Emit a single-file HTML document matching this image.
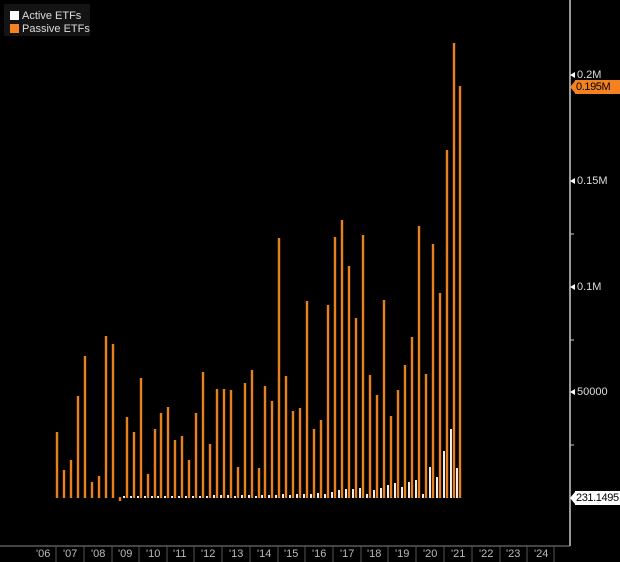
<!DOCTYPE html>
<html><head><meta charset="utf-8"><style>
html,body{margin:0;padding:0;background:#000;}
body{width:620px;height:562px;overflow:hidden;position:relative;font-family:"Liberation Sans",sans-serif;}
.legend{position:absolute;left:4px;top:4px;width:86px;height:32px;background:#141414;}
.legend div{position:absolute;left:6px;font-size:11px;color:#ddd;line-height:12px;}
.legend span{display:inline-block;width:9px;height:9px;margin-right:3px;vertical-align:-1px;}
.yl{position:absolute;left:577px;font-size:11px;color:#ddd;line-height:12px;}
.tag{position:absolute;left:575px;right:0;height:14px;line-height:14px;font-size:11px;padding-left:1px;white-space:nowrap;overflow:hidden;letter-spacing:-0.4px;}
.xl{position:absolute;top:548px;font-size:11px;color:#bbb;line-height:12px;}
</style></head><body>
<div class="legend">
<div style="top:6px"><span style="background:#fff"></span>Active ETFs</div>
<div style="top:19px"><span style="background:#f58220"></span>Passive ETFs</div>
</div>
<svg width="620" height="562" style="position:absolute;left:0;top:0">
<line x1="570" y1="0" x2="570" y2="546" stroke="#ccc" stroke-width="1.5"/>
<line x1="0" y1="546" x2="570" y2="546" stroke="#888" stroke-width="1"/>
<path d="M570 75l5 -3v6z M570 181l5 -3v6z M570 287l5 -3v6z M570 392l5 -3v6z M570 498l5 -6v12z" fill="#fff"/>
<path d="M570 87l5 -6v12z" fill="#f58220"/>
<path d="M570 234h4 M570 340h4 M570 445h4" stroke="#ccc"/>
<path stroke="#e8801e" stroke-width="2.4" d="M57 498V432M64 498V470M71 498V460M78 498V396M85 498V356M92 498V482M99 498V476M106 498V336M113 498V344M120 497V501M127 498V417M134 498V432M141 498V378M148 498V474M155 498V429M161 498V413M168 498V407M175 498V440M182 498V436M189 498V460M196 498V413M203 498V372M210 498V444M217 498V389M224 498V389M231 498V390M238 498V467M245 498V383M252 498V370M259 498V468M265 498V386M272 498V401M279 498V238M286 498V376M293 498V411M300 498V408M307 498V301M314 498V429M321 498V420M328 498V305M335 498V237M342 498V220M349 498V266M356 498V318M363 498V235M370 498V375M377 498V395M384 498V300M391 498V416M398 498V390M405 498V365M412 498V337M419 498V226M426 498V374M433 498V244M440 498V293M447 498V150M454 498V43M460 498V86"/>
<path stroke="#eee" stroke-width="2" d="M124 498V496M131 498V496M138 498V496M145 498V496M152 498V496M158 498V496M165 498V496M172 498V496M179 498V496M186 498V496M193 498V496M200 498V496M207 498V496M214 498V495M221 498V495M228 498V495M235 498V496M242 498V495M249 498V495M256 498V496M262 498V495M269 498V495M276 498V495M283 498V494M290 498V495M297 498V494M304 498V494M311 498V494M318 498V493M325 498V494M332 498V492M339 498V490M346 498V489M353 498V489M360 498V488M367 498V494M374 498V490M381 498V488M388 498V485M395 498V483M402 498V487M409 498V482M416 498V480M423 498V494M430 498V467M437 498V477M444 498V451M451 498V429M457 498V468"/>
<path stroke="#555" d="M56 546v16M84 546v16M112 546v16M139 546v16M167 546v16M194 546v16M222 546v16M250 546v16M278 546v16M305 546v16M333 546v16M361 546v16M388 546v16M416 546v16M444 546v16M472 546v16M500 546v16M527 546v16M554 546v16"/>
</svg>
<div class="yl" style="top:69px">0.2M</div>
<div class="yl" style="top:175px">0.15M</div>
<div class="yl" style="top:281px">0.1M</div>
<div class="yl" style="top:386px">50000</div>
<div class="tag" style="top:80px;background:#f58220;color:#000;">0.195M</div>
<div class="tag" style="top:491px;background:#fff;color:#000;">231.1495</div>
<div class="xl" style="left:36px">'06</div>
<div class="xl" style="left:63px">'07</div>
<div class="xl" style="left:91px">'08</div>
<div class="xl" style="left:118px">'09</div>
<div class="xl" style="left:146px">'10</div>
<div class="xl" style="left:173px">'11</div>
<div class="xl" style="left:201px">'12</div>
<div class="xl" style="left:229px">'13</div>
<div class="xl" style="left:257px">'14</div>
<div class="xl" style="left:284px">'15</div>
<div class="xl" style="left:312px">'16</div>
<div class="xl" style="left:340px">'17</div>
<div class="xl" style="left:367px">'18</div>
<div class="xl" style="left:395px">'19</div>
<div class="xl" style="left:423px">'20</div>
<div class="xl" style="left:451px">'21</div>
<div class="xl" style="left:479px">'22</div>
<div class="xl" style="left:506px">'23</div>
<div class="xl" style="left:534px">'24</div>
</body></html>
